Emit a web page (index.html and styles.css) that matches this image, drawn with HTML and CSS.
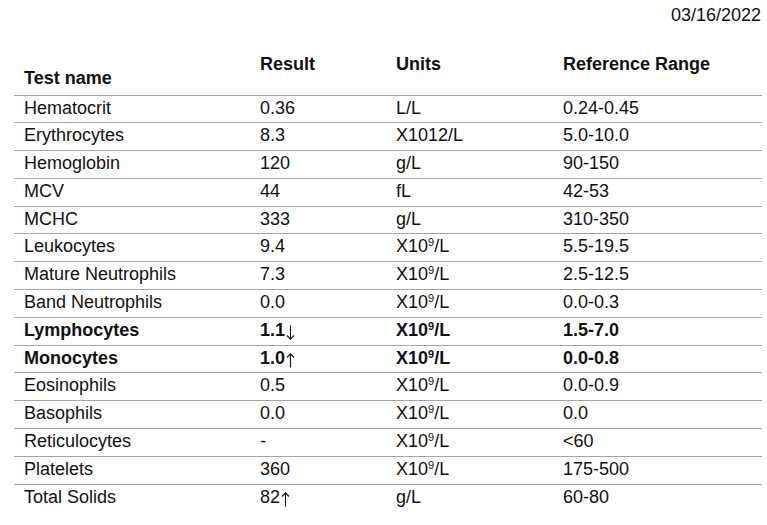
FILE: index.html
```html
<!DOCTYPE html>
<html>
<head>
<meta charset="utf-8">
<link rel="stylesheet" href="styles.css">
</head>
<body>
<div class="date">03/16/2022</div>
<div class="table">
  <div class="row head">
    <div class="cell name">Test name</div>
    <div class="cell">Result</div>
    <div class="cell">Units</div>
    <div class="cell">Reference Range</div>
  </div>
  <div class="row"><div class="cell">Hematocrit</div><div class="cell">0.36</div><div class="cell">L/L</div><div class="cell">0.24-0.45</div></div>
  <div class="row"><div class="cell">Erythrocytes</div><div class="cell">8.3</div><div class="cell">X1012/L</div><div class="cell">5.0-10.0</div></div>
  <div class="row"><div class="cell">Hemoglobin</div><div class="cell">120</div><div class="cell">g/L</div><div class="cell">90-150</div></div>
  <div class="row"><div class="cell">MCV</div><div class="cell">44</div><div class="cell">fL</div><div class="cell">42-53</div></div>
  <div class="row"><div class="cell">MCHC</div><div class="cell">333</div><div class="cell">g/L</div><div class="cell">310-350</div></div>
  <div class="row"><div class="cell">Leukocytes</div><div class="cell">9.4</div><div class="cell">X10<sup class="sup">9</sup>/L</div><div class="cell">5.5-19.5</div></div>
  <div class="row"><div class="cell">Mature Neutrophils</div><div class="cell">7.3</div><div class="cell">X10<sup class="sup">9</sup>/L</div><div class="cell">2.5-12.5</div></div>
  <div class="row"><div class="cell">Band Neutrophils</div><div class="cell">0.0</div><div class="cell">X10<sup class="sup">9</sup>/L</div><div class="cell">0.0-0.3</div></div>
  <div class="row bold"><div class="cell">Lymphocytes</div><div class="cell">1.1<svg class="arrow" width="9" height="15" viewBox="0 0 9 15"><path d="M4.5 0.5V14M1 10.5L4.5 14.2L8 10.5" fill="none" stroke="#111" stroke-width="1.1"/></svg></div><div class="cell">X10<sup class="sup">9</sup>/L</div><div class="cell">1.5-7.0</div></div>
  <div class="row bold"><div class="cell">Monocytes</div><div class="cell">1.0<svg class="arrow" width="9" height="15" viewBox="0 0 9 15"><path d="M4.5 14.5V1M1 4.5L4.5 0.8L8 4.5" fill="none" stroke="#111" stroke-width="1.1"/></svg></div><div class="cell">X10<sup class="sup">9</sup>/L</div><div class="cell">0.0-0.8</div></div>
  <div class="row"><div class="cell">Eosinophils</div><div class="cell">0.5</div><div class="cell">X10<sup class="sup">9</sup>/L</div><div class="cell">0.0-0.9</div></div>
  <div class="row"><div class="cell">Basophils</div><div class="cell">0.0</div><div class="cell">X10<sup class="sup">9</sup>/L</div><div class="cell">0.0</div></div>
  <div class="row"><div class="cell">Reticulocytes</div><div class="cell">-</div><div class="cell">X10<sup class="sup">9</sup>/L</div><div class="cell">&lt;60</div></div>
  <div class="row"><div class="cell">Platelets</div><div class="cell">360</div><div class="cell">X10<sup class="sup">9</sup>/L</div><div class="cell">175-500</div></div>
  <div class="row"><div class="cell">Total Solids</div><div class="cell">82<svg class="arrow" width="9" height="15" viewBox="0 0 9 15"><path d="M4.5 14.5V1M1 4.5L4.5 0.8L8 4.5" fill="none" stroke="#111" stroke-width="1.1"/></svg></div><div class="cell">g/L</div><div class="cell">60-80</div></div>
</div>
</body>
</html>
```
FILE: styles.css
```css
html, body {
  margin: 0;
  padding: 0;
  background: #ffffff;
}
body {
  font-family: "Liberation Sans", Arial, sans-serif;
  font-size: 18px;
  line-height: 21px;
  color: #111111;
  padding-top: 5px;
}
.date {
  text-align: right;
  padding-right: 6px;
}
.table {
  margin-left: 14px;
  width: 748px;
  margin-top: 28px;
}
.row {
  display: grid;
  grid-template-columns: 236px 136px 167px 209px;
  box-sizing: border-box;
  height: 27.8px;
  padding-top: 2px;
  border-top: 1px solid #a4a4a4;
}
.row.head {
  border-top: none;
  height: 40.5px;
  padding-top: 0;
  font-weight: bold;
}
.row.head .name {
  align-self: end;
  margin-bottom: 6px;
}
.cell {
  padding-left: 10px;
  white-space: nowrap;
}
.bold {
  font-weight: bold;
}
.sup {
  font-size: 11px;
  line-height: 0;
  vertical-align: 6px;
}
.arrow {
  vertical-align: -4px;
  margin-left: 1px;
}
```
